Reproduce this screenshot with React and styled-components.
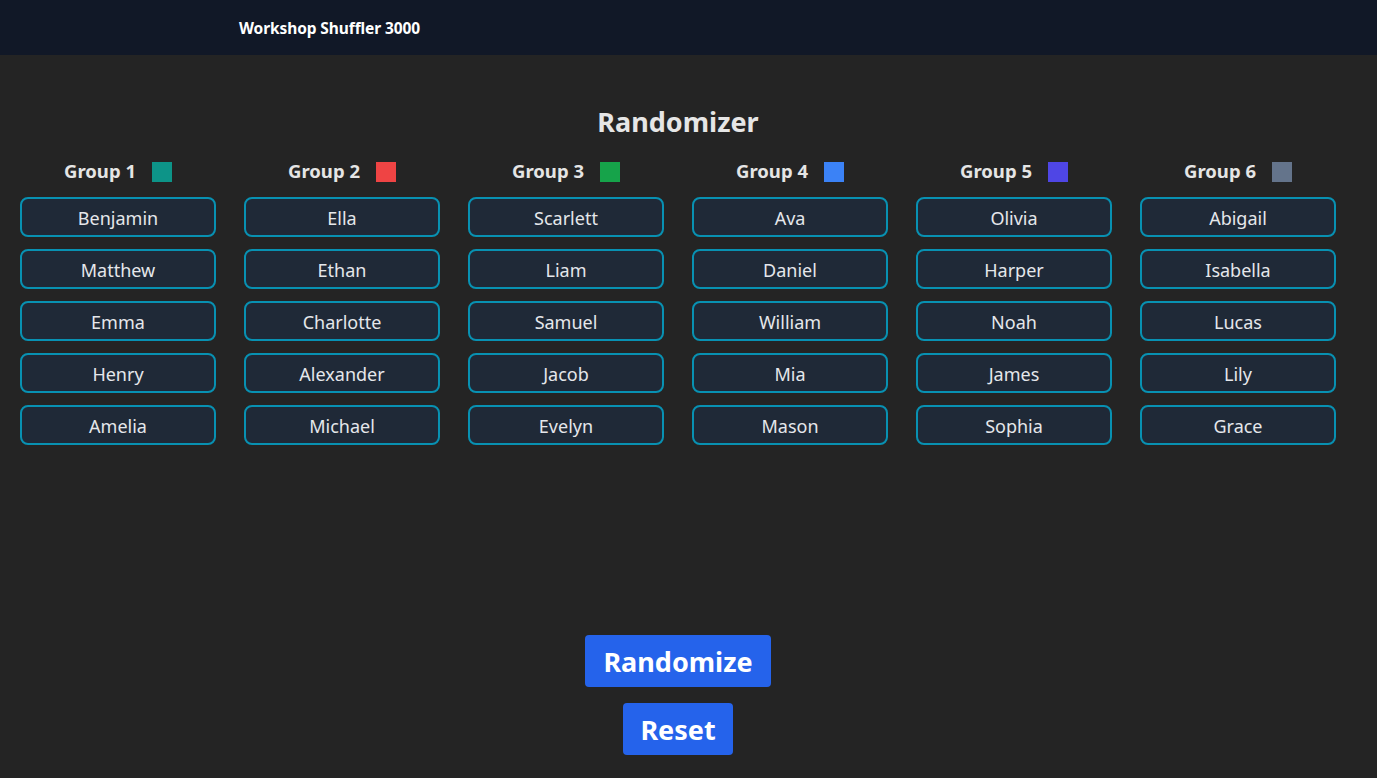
import React from "react";
import styled, { createGlobalStyle } from "styled-components";

const Global = createGlobalStyle`
  html, body { margin: 0; padding: 0; }
  body {
    background: #242424;
    color: rgba(255,255,255,0.87);
    font-family: "Noto Sans", "Open Sans", sans-serif;
  }
  * { box-sizing: border-box; }
`;

const Header = styled.header`
  height: 55px;
  background: #111827;
  display: flex;
  align-items: center;
  padding-left: 239px;
`;

const Brand = styled.div`
  color: #ffffff;
  font-size: 15.5px;
  font-weight: 700;
  letter-spacing: -0.1px;
`;

const Main = styled.main`
  min-height: calc(100vh - 55px);
  display: flex;
  flex-direction: column;
  padding: 0 41px 23px 20px;
`;

const Title = styled.h1`
  margin: 47px 0 0;
  text-align: center;
  font-size: 27px;
  font-weight: 700;
  line-height: 40px;
  color: #e6e6e6;
`;

const Groups = styled.div`
  display: grid;
  grid-template-columns: repeat(6, 196px);
  column-gap: 28px;
  margin-top: 15px;
`;

const Column = styled.div`
  display: flex;
  flex-direction: column;
  gap: 12px;
`;

const GroupHead = styled.div`
  display: flex;
  align-items: center;
  justify-content: center;
  gap: 16px;
  height: 26px;
  margin-bottom: 2px;
`;

const GroupName = styled.span`
  font-size: 18.5px;
  font-weight: 700;
  color: #e5e5e5;
`;

const Swatch = styled.span`
  width: 20px;
  height: 20px;
  background: ${(p) => p.$color};
  margin-top: 3px;
`;

const Person = styled.div`
  height: 40px;
  border: 2px solid #0891b2;
  border-radius: 8px;
  background: #1f2937;
  display: flex;
  align-items: center;
  justify-content: center;
  font-size: 18px;
  color: #e5e7eb;
  padding-top: 1px;
`;

const Actions = styled.div`
  margin-top: auto;
  display: flex;
  flex-direction: column;
  align-items: center;
  gap: 16px;
`;

const Button = styled.button`
  height: 52px;
  padding: 0 ${(p) => (p.$narrow ? 17 : 18)}px;
  border: none;
  border-radius: 4px;
  background: #2563eb;
  color: #ffffff;
  font-family: inherit;
  font-size: 27px;
  font-weight: 700;
  cursor: pointer;
`;

const groups = [
  { name: "Group 1", color: "#0d9488", people: ["Benjamin", "Matthew", "Emma", "Henry", "Amelia"] },
  { name: "Group 2", color: "#ef4444", people: ["Ella", "Ethan", "Charlotte", "Alexander", "Michael"] },
  { name: "Group 3", color: "#16a34a", people: ["Scarlett", "Liam", "Samuel", "Jacob", "Evelyn"] },
  { name: "Group 4", color: "#3b82f6", people: ["Ava", "Daniel", "William", "Mia", "Mason"] },
  { name: "Group 5", color: "#4f46e5", people: ["Olivia", "Harper", "Noah", "James", "Sophia"] },
  { name: "Group 6", color: "#64748b", people: ["Abigail", "Isabella", "Lucas", "Lily", "Grace"] },
];

export default function App() {
  return (
    <>
      <Global />
      <Header>
        <Brand>Workshop Shuffler 3000</Brand>
      </Header>
      <Main>
        <Title>Randomizer</Title>
        <Groups>
          {groups.map((g) => (
            <Column key={g.name}>
              <GroupHead>
                <GroupName>{g.name}</GroupName>
                <Swatch $color={g.color} />
              </GroupHead>
              {g.people.map((p) => (
                <Person key={p}>{p}</Person>
              ))}
            </Column>
          ))}
        </Groups>
        <Actions>
          <Button>Randomize</Button>
          <Button $narrow>Reset</Button>
        </Actions>
      </Main>
    </>
  );
}
